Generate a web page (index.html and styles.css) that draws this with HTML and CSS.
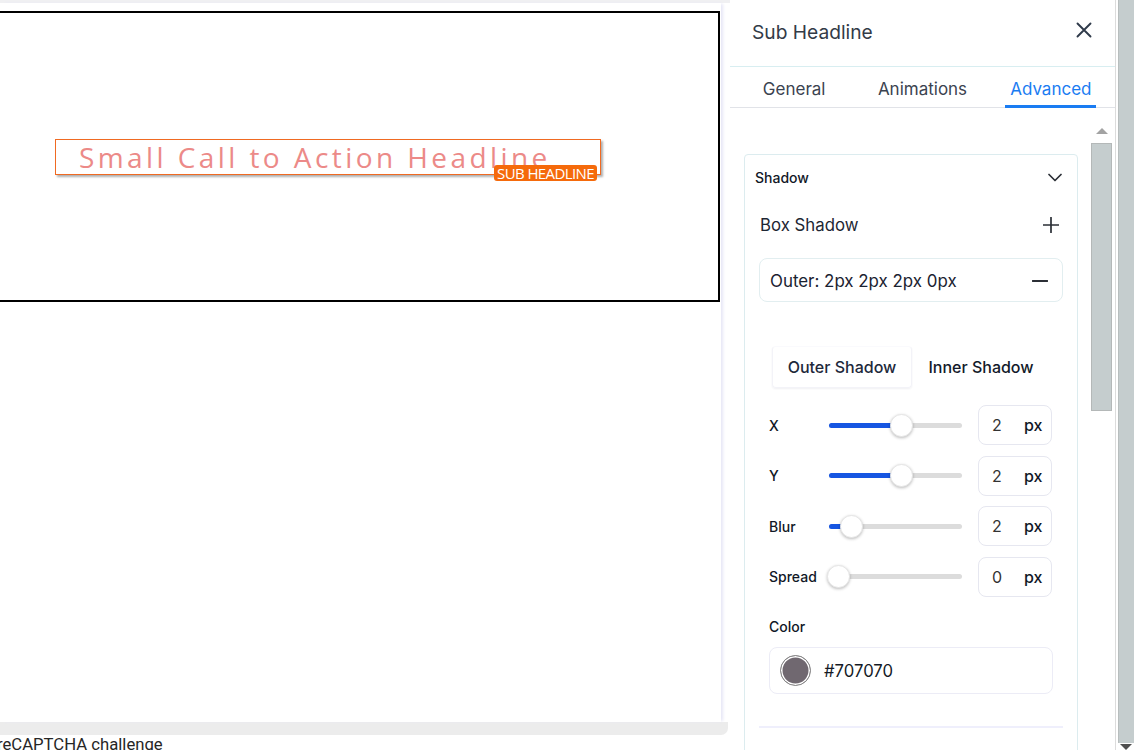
FILE: index.html
```html
<!DOCTYPE html>
<html lang="en">
<head>
<meta charset="utf-8">
<title>Sub Headline – Advanced</title>
<link rel="stylesheet" href="styles.css">
</head>
<body>
<div class="app">
  <div class="stage">
    <div class="topstrip"></div>
    <div class="page">
      <div class="section">
        <div class="headline">
          <span class="headline-text">Small Call to Action Headline</span>
          <span class="badge">SUB HEADLINE</span>
        </div>
      </div>
    </div>
    <div class="pagefoot"></div>
    <div class="captcha">reCAPTCHA challenge</div>
  </div>

  <aside class="panel">
    <header class="panel-head">
      <h2 class="panel-title">Sub Headline</h2>
      <svg class="icon-close" width="16" height="16" viewBox="0 0 16 16"><path d="M1.5 1.5 L14.5 14.5 M14.5 1.5 L1.5 14.5" stroke="#2f3a4a" stroke-width="1.9" stroke-linecap="round" fill="none"/></svg>
    </header>
    <nav class="tabs">
      <div class="tab"><span class="tab-label">General</span></div>
      <div class="tab"><span class="tab-label">Animations</span></div>
      <div class="tab"><span class="tab-label active">Advanced</span></div>
    </nav>
    <div class="panel-body">
      <div class="scroll-content">
        <section class="card">
          <div class="card-head">
            <span class="card-title">Shadow</span>
            <svg width="14" height="9" viewBox="0 0 14 9"><path d="M1 1.5 L7 7.5 L13 1.5" stroke="#2b2f36" stroke-width="1.7" fill="none" stroke-linecap="round" stroke-linejoin="round"/></svg>
          </div>
          <div class="row-title">
            <span>Box Shadow</span>
            <svg width="16" height="16" viewBox="0 0 16 16"><path d="M8 0.5 V15.5 M0.5 8 H15.5" stroke="#2b2f36" stroke-width="1.7" fill="none" stroke-linecap="round"/></svg>
          </div>
          <div class="shadow-item">
            <span>Outer: 2px 2px 2px 0px</span>
            <svg width="16" height="4" viewBox="0 0 16 4"><path d="M0.5 2 H15.5" stroke="#2b2f36" stroke-width="1.8" stroke-linecap="round"/></svg>
          </div>
          <div class="controls">
            <div class="segment">
              <div class="seg-btn active">Outer Shadow</div>
              <div class="seg-btn">Inner Shadow</div>
            </div>
            <div class="sliders">
              <div class="slider-row">
                <span class="slider-label">X</span>
                <div class="slider"><div class="fill" style="width:73px"></div><div class="thumb" style="left:61px"></div></div>
                <div class="num-box"><span class="num">2</span><span class="unit">px</span></div>
              </div>
              <div class="slider-row">
                <span class="slider-label">Y</span>
                <div class="slider"><div class="fill" style="width:73px"></div><div class="thumb" style="left:61px"></div></div>
                <div class="num-box"><span class="num">2</span><span class="unit">px</span></div>
              </div>
              <div class="slider-row">
                <span class="slider-label">Blur</span>
                <div class="slider"><div class="fill" style="width:22px"></div><div class="thumb" style="left:11px"></div></div>
                <div class="num-box"><span class="num">2</span><span class="unit">px</span></div>
              </div>
              <div class="slider-row">
                <span class="slider-label">Spread</span>
                <div class="slider"><div class="fill" style="width:0px"></div><div class="thumb" style="left:-2px"></div></div>
                <div class="num-box"><span class="num">0</span><span class="unit">px</span></div>
              </div>
            </div>
            <div class="color-label">Color</div>
            <div class="color-box">
              <span class="swatch"></span>
              <span class="color-value">#707070</span>
            </div>
          </div>
          <div class="divider"></div>
        </section>
      </div>
      <div class="vscroll">
        <span class="arrow-up"></span>
        <span class="vthumb"></span>
      </div>
    </div>
  </aside>

  <div class="outer-scroll">
    <span class="othumb"></span>
    <span class="arrow-down"></span>
  </div>
</div>
</body>
</html>
```

FILE: styles.css
```css
* { box-sizing: border-box; }
html, body { margin: 0; padding: 0; }
body {
  width: 1134px;
  height: 750px;
  overflow: hidden;
  background: #ffffff;
  font-family: "Inter", "Liberation Sans", sans-serif;
}

.app {
  display: flex;
  width: 1134px;
  height: 750px;
  overflow: hidden;
}

/* ---------- left stage ---------- */
.stage {
  width: 730px;
  flex: none;
  display: flex;
  flex-direction: column;
  background: #ffffff;
  overflow: hidden;
}
.stage > * { flex: none; }
.topstrip {
  height: 3px;
  background: #f0f0f2;
}
.page {
  width: 721px;
  height: 719px;
  background: #ffffff;
  box-shadow: 3px 0 3px -1px #e6e6f6;
  padding-top: 8px;
  position: relative;
  z-index: 1;
}
.section {
  width: 722px;
  height: 291px;
  margin-left: -2px;
  border: 2px solid #000000;
  display: flex;
  align-items: center;
  padding-left: 55px;
}
.headline {
  position: relative;
  width: 546px;
  height: 36px;
  border: 1px solid #f06a22;
  box-shadow: 2px 2px 2px rgba(112, 112, 112, 0.55);
  padding-left: 23px;
  display: flex;
  align-items: center;
  background: #ffffff;
}
.headline-text {
  font-family: "Open Sans", sans-serif;
  font-size: 28px;
  letter-spacing: 3.42px;
  color: #ec8a88;
  white-space: nowrap;
  line-height: 34px;
}
.badge {
  position: absolute;
  right: 3px;
  bottom: -7px;
  height: 16px;
  padding: 0 3px;
  background: #f56a0b;
  border-radius: 3px;
  color: #ffffff;
  font-family: "Open Sans", sans-serif;
  font-size: 15px;
  letter-spacing: -0.6px;
  line-height: 16px;
  white-space: nowrap;
}
.pagefoot {
  width: 728px;
  height: 13px;
  background: #ececec;
  border-bottom-right-radius: 7px;
}
.captcha {
  margin-left: -3px;
  font-family: "Roboto", "Liberation Sans", sans-serif;
  font-size: 16.7px;
  line-height: 20px;
  color: #262626;
  white-space: nowrap;
}

/* ---------- right panel ---------- */
.panel {
  width: 385px;
  flex: none;
  display: flex;
  flex-direction: column;
  background: #ffffff;
}
.panel-head {
  height: 67px;
  flex: none;
  border-bottom: 1px solid #d8eef1;
  display: flex;
  align-items: center;
  justify-content: space-between;
  padding: 0 23px 2px 22px;
}
.panel-title {
  margin: 0;
  font-size: 19.2px;
  font-weight: 400;
  color: #333b47;
}
.icon-close { display: block; margin-top: -4px; }

.tabs {
  height: 41px;
  flex: none;
  display: flex;
  border-bottom: 1px solid #e1e3e8;
}
.tab {
  flex: 1;
  display: flex;
  justify-content: center;
}
.tab-label {
  height: 41px;
  margin-bottom: -1px;
  padding: 6px 5px 0;
  border-bottom: 3px solid transparent;
  display: flex;
  align-items: center;
  font-size: 17px;
  color: #3b4350;
}
.tab-label.active {
  color: #1a7cf2;
  border-bottom-color: #1a7cf2;
}

.panel-body {
  flex: 1;
  display: flex;
  min-height: 0;
}
.scroll-content {
  flex: 1;
  padding: 46px 0 0 14px;
  overflow: hidden;
}
.card {
  width: 334px;
  border: 1px solid #dcecef;
  border-radius: 4px;
  height: 620px;
  color: #141a26;
}
.card-head {
  height: 45px;
  display: flex;
  align-items: center;
  justify-content: space-between;
  padding: 0 15px 0 10px;
}
.card-title {
  font-size: 14px;
  font-weight: 500;
  color: #111827;
}
.row-title {
  height: 50px;
  display: flex;
  align-items: center;
  justify-content: space-between;
  padding: 0 18px 0 15px;
  font-size: 16.8px;
  color: #1e2633;
}
.shadow-item {
  margin: 8px 14px 0;
  height: 44px;
  border: 1px solid #e2eef0;
  border-radius: 8px;
  display: flex;
  align-items: center;
  justify-content: space-between;
  padding: 1px 14px 0 10px;
  font-size: 16.9px;
  color: #1a2230;
}

.controls {
  margin: 0 24px;
}
.segment {
  margin-top: 44px;
  display: flex;
  padding: 0 3px;
}
.seg-btn {
  flex: 1;
  height: 42px;
  display: flex;
  align-items: center;
  justify-content: center;
  font-size: 16px;
  font-weight: 500;
  color: #131a2a;
  border-radius: 4px;
}
.seg-btn.active {
  border: 1px solid #f3f3f8;
  border-top-color: #fafafd;
  box-shadow: 0 1px 2px rgba(40, 40, 90, 0.07);
  color: #1e293b;
}

.sliders {
  margin-top: 17px;
  display: flex;
  flex-direction: column;
  gap: 10.5px;
}
.slider-row {
  height: 40px;
  display: flex;
  align-items: center;
}
.slider-label {
  width: 60px;
  font-size: 14px;
  font-weight: 500;
  color: #111827;
}
.slider {
  position: relative;
  width: 133px;
  height: 5px;
  border-radius: 3px;
  background: #dcdcdc;
  margin-right: 16px;
}
.fill {
  height: 5px;
  border-radius: 3px;
  background: #1656e2;
}
.thumb {
  position: absolute;
  top: -9px;
  width: 23px;
  height: 23px;
  border-radius: 50%;
  background: #ffffff;
  border: 1px solid #e6e6e6;
  box-shadow: 0 1px 3px rgba(0, 0, 0, 0.25);
}
.num-box {
  width: 74px;
  height: 40px;
  border: 1px solid #e6e7f0;
  border-radius: 8px;
  display: flex;
  align-items: center;
  padding-left: 13px;
  font-size: 16px;
}
.num {
  width: 32px;
  color: #333333;
}
.unit {
  color: #111827;
  font-weight: 500;
}

.color-label {
  margin-top: 20px;
  height: 20px;
  line-height: 20px;
  font-size: 14px;
  font-weight: 500;
  color: #111827;
}
.color-box {
  margin-top: 10.5px;
  height: 47px;
  border: 1px solid #ececf6;
  border-radius: 8px;
  display: flex;
  align-items: center;
  padding-left: 10px;
  gap: 13px;
  font-size: 16.7px;
  color: #141a26;
}
.swatch {
  width: 31px;
  height: 31px;
  border-radius: 50%;
  background: #706870;
  border: 1px solid #8a8a8a;
  box-shadow: inset 0 0 0 1.5px #ffffff;
}
.divider {
  margin: 32px 14px 0;
  height: 2px;
  background: #efeffc;
}

/* inner scrollbar */
.vscroll {
  width: 25px;
  flex: none;
  display: flex;
  flex-direction: column;
  align-items: center;
  padding-top: 20px;
}
.arrow-up {
  width: 0;
  height: 0;
  border-left: 6px solid transparent;
  border-right: 6px solid transparent;
  border-bottom: 6px solid #a3a3a3;
  margin-left: -1px;
}
.vthumb {
  margin-top: 9px;
  width: 21px;
  height: 268px;
  background: #c5cdce;
  border: 1px solid #b4b8b8;
  margin-left: -3px;
}

/* outer window scrollbar */
.outer-scroll {
  width: 19px;
  flex: none;
  border-left: 1px solid #dcdcdc;
  padding-left: 2px;
  display: flex;
  flex-direction: column;
  align-items: center;
  background: #ffffff;
}
.othumb {
  width: 16px;
  height: 743px;
  background: #c5cdce;
  border-left: 1px solid #b8bebe;
  flex: none;
}
.arrow-down {
  margin-top: 1px;
  width: 0;
  height: 0;
  border-left: 6px solid transparent;
  border-right: 6px solid transparent;
  border-top: 6px solid #4f4f4f;
}
```
